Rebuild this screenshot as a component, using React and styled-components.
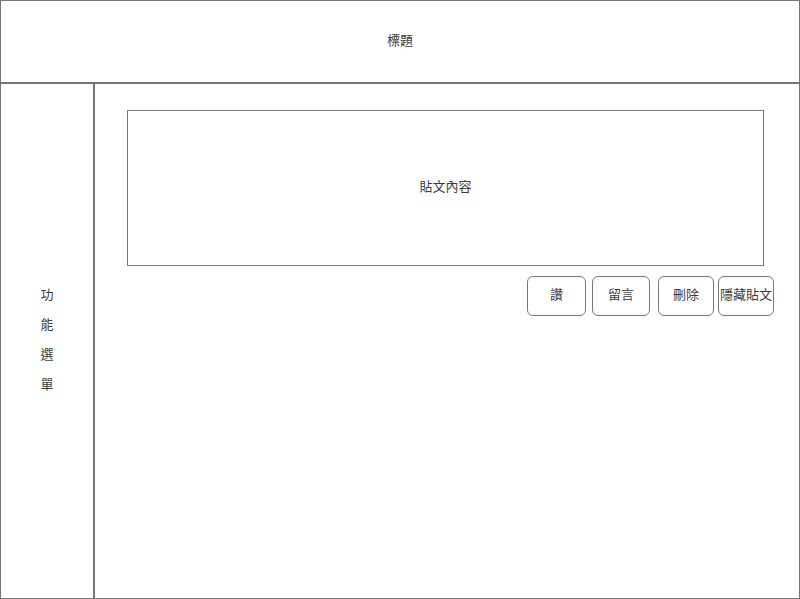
import React from "react";
import styled, { createGlobalStyle } from "styled-components";

const GlobalStyle = createGlobalStyle`
  * { box-sizing: border-box; }
  body {
    margin: 0;
    background: #ffffff;
    font-family: "Liberation Sans", "Noto Sans CJK TC", sans-serif;
    font-size: 13px;
    color: #3c3c3c;
  }
`;

const Frame = styled.div`
  width: 800px;
  height: 599px;
  border: 1px solid #777777;
  display: flex;
  flex-direction: column;
`;

const Header = styled.header`
  height: 83px;
  flex: none;
  border-bottom: 2px solid #777777;
  display: flex;
  align-items: center;
  justify-content: center;
  padding-bottom: 4px;
`;

const Body = styled.div`
  flex: 1;
  display: flex;
  min-height: 0;
`;

const Sidebar = styled.nav`
  width: 94px;
  flex: none;
  border-right: 2px solid #777777;
  display: flex;
  flex-direction: column;
  align-items: center;
  justify-content: center;
  padding-bottom: 2px;
`;

const MenuItem = styled.div`
  line-height: 30px;
`;

const Content = styled.main`
  flex: 1;
  padding: 26px 0 0 32px;
  display: flex;
  flex-direction: column;
`;

const Post = styled.section`
  width: 637px;
  height: 156px;
  border: 1px solid #777777;
  display: flex;
  align-items: center;
  justify-content: center;
  padding-bottom: 5px;
`;

const Actions = styled.div`
  width: 647px;
  margin-top: 10px;
  display: flex;
  justify-content: flex-end;
`;

const ActionButton = styled.button`
  width: ${(p) => p.$w}px;
  height: 40px;
  margin-left: ${(p) => p.$gap}px;
  padding: 0 0 5px;
  border: 1px solid #777777;
  border-radius: 6px;
  background: #ffffff;
  font-family: inherit;
  font-size: 13px;
  color: #3c3c3c;
  white-space: nowrap;
  cursor: pointer;
`;

const buttons = [
  { label: "讚", w: 59, gap: 0 },
  { label: "留言", w: 58, gap: 6 },
  { label: "刪除", w: 56, gap: 8 },
  { label: "隱藏貼文", w: 56, gap: 4 },
];

export default function App() {
  return (
    <>
      <GlobalStyle />
      <Frame>
        <Header>標題</Header>
        <Body>
          <Sidebar>
            {["功", "能", "選", "單"].map((c) => (
              <MenuItem key={c}>{c}</MenuItem>
            ))}
          </Sidebar>
          <Content>
            <Post>貼文內容</Post>
            <Actions>
              {buttons.map((b) => (
                <ActionButton key={b.label} $w={b.w} $gap={b.gap}>
                  {b.label}
                </ActionButton>
              ))}
            </Actions>
          </Content>
        </Body>
      </Frame>
    </>
  );
}
